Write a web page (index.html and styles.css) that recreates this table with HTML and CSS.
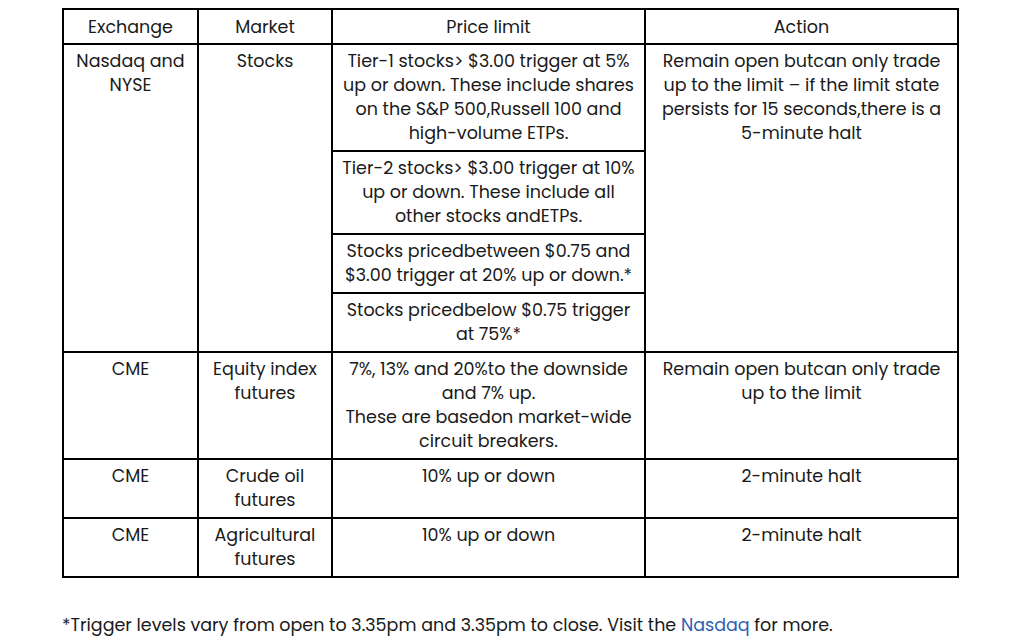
FILE: index.html
```html
<!DOCTYPE html>
<html lang="en">
<head>
<meta charset="utf-8">
<title>Price limits</title>
<link rel="stylesheet" href="styles.css">
</head>
<body>
<div class="page">
<table class="limits">
  <colgroup>
    <col class="c-ex"><col class="c-mk"><col class="c-pl"><col class="c-ac">
  </colgroup>
  <thead>
    <tr><th>Exchange</th><th>Market</th><th>Price limit</th><th>Action</th></tr>
  </thead>
  <tbody>
    <tr>
      <td rowspan="4">Nasdaq and NYSE</td>
      <td rowspan="4">Stocks</td>
      <td>Tier-1 stocks&gt; $3.00 trigger at 5% up or down. These include shares on the S&amp;P 500,Russell 100 and high-volume ETPs.</td>
      <td rowspan="4">Remain open butcan only trade up to the limit – if the limit state persists for 15 seconds,there is a 5-minute halt</td>
    </tr>
    <tr><td>Tier-2 stocks&gt; $3.00 trigger at 10% up or down. These include all other stocks andETPs.</td></tr>
    <tr><td>Stocks pricedbetween $0.75 and $3.00 trigger at 20% up or down.*</td></tr>
    <tr><td>Stocks pricedbelow $0.75 trigger at 75%*</td></tr>
    <tr>
      <td>CME</td>
      <td>Equity index futures</td>
      <td>7%, 13% and 20%to the downside and 7% up.<br>These are basedon market-wide circuit breakers.</td>
      <td>Remain open butcan only trade up to the limit</td>
    </tr>
    <tr>
      <td>CME</td>
      <td>Crude oil futures</td>
      <td>10% up or down</td>
      <td>2-minute halt</td>
    </tr>
    <tr>
      <td>CME</td>
      <td>Agricultural futures</td>
      <td>10% up or down</td>
      <td>2-minute halt</td>
    </tr>
  </tbody>
</table>
<p class="note">*Trigger levels vary from open to 3.35pm and 3.35pm to close. Visit the <a href="#" class="link">Nasdaq</a> for more.</p>
</div>
</body>
</html>
```
FILE: styles.css
```css
html, body {
  margin: 0;
  padding: 0;
  background: #fff;
}
body {
  font-family: "Poppins", "DejaVu Sans", sans-serif;
  color: #1a1a1a;
  font-size: 17.5px;
  line-height: 24px;
}
.page {
  padding: 8px 0 0 62px;
}
.limits {
  border-collapse: collapse;
  width: 895px;
  table-layout: fixed;
}
.c-ex { width: 135px; }
.c-mk { width: 134px; }
.c-pl { width: 313px; }
.c-ac { width: 313px; }
.limits th,
.limits td {
  border: 2px solid #000;
  padding: 4px 8px 5px;
  text-align: center;
  vertical-align: top;
  font-weight: 400;
}
.limits thead th {
  padding: 5px 8px 4px;
}
.note {
  margin: 35px 0 0;
  font-size: 17.5px;
}
.link {
  color: #2f5fb3;
  text-decoration: none;
}
```
